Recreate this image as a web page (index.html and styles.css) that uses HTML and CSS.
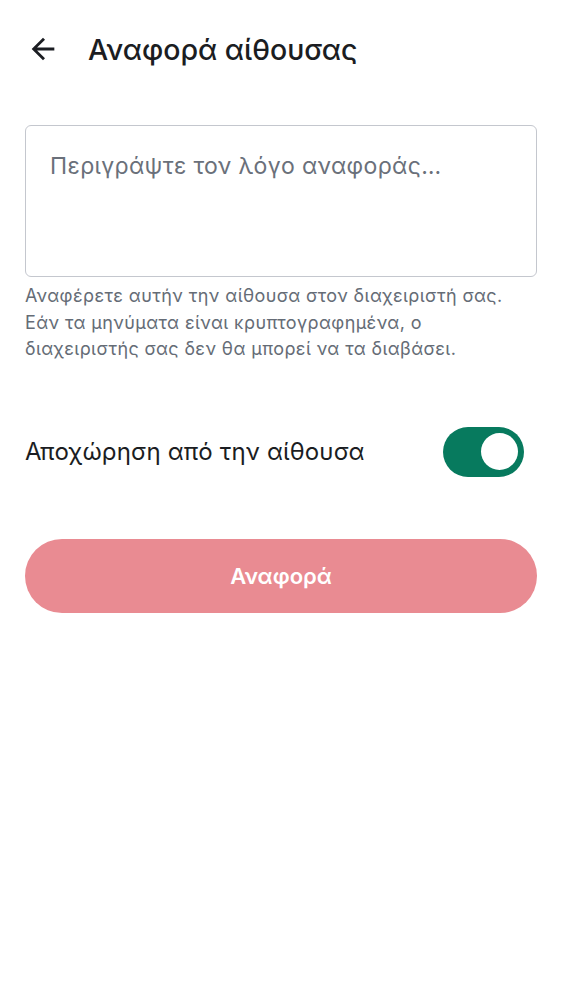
FILE: index.html
```html
<!DOCTYPE html>
<html lang="el">
<head>
<meta charset="utf-8">
<title>Αναφορά αίθουσας</title>
<link rel="stylesheet" href="styles.css">
</head>
<body>
<div class="screen">
  <header class="topbar">
    <button class="back" aria-label="Πίσω">
      <svg viewBox="0 0 24 24" width="34" height="34"><path d="M20 11H7.83l5.59-5.59L12 4l-8 8 8 8 1.41-1.41L7.83 13H20v-2z" fill="#1b1d22"/></svg>
    </button>
    <h1 class="title">Αναφορά αίθουσας</h1>
  </header>
  <main class="content">
    <div class="field">
      <div class="placeholder">Περιγράψτε τον λόγο αναφοράς…</div>
    </div>
    <p class="helper">Αναφέρετε αυτήν την αίθουσα στον διαχειριστή σας. Εάν τα μηνύματα είναι κρυπτογραφημένα, ο διαχειριστής σας δεν θα μπορεί να τα διαβάσει.</p>
    <div class="toggle-row">
      <span class="toggle-label">Αποχώρηση από την αίθουσα</span>
      <span class="switch"><span class="thumb"></span></span>
    </div>
    <button class="submit">Αναφορά</button>
  </main>
</div>
</body>
</html>
```
FILE: styles.css
```css
html, body {
  margin: 0;
  padding: 0;
  background: #ffffff;
}
body {
  font-family: Inter, "Noto Sans", sans-serif;
  color: #1b1d22;
}
.screen {
  width: 562px;
  min-height: 1000px;
}
.topbar {
  display: flex;
  align-items: center;
  height: 100px;
  padding-left: 26px;
  box-sizing: border-box;
  padding-bottom: 2px;
}
.back {
  display: flex;
  border: 0;
  background: none;
  padding: 0;
  width: 34px;
  height: 34px;
  margin-right: 28px;
}
.title {
  margin: 0;
  font-size: 28.5px;
  font-weight: 500;
  letter-spacing: 0;
  color: #1b1d22;
}
.content {
  padding: 25px 25px 0;
  display: flex;
  flex-direction: column;
}
.field {
  height: 152px;
  border: 1.5px solid #c4c7ce;
  border-radius: 6px;
  box-sizing: border-box;
  padding: 24px 24px;
}
.placeholder {
  font-size: 23px;
  line-height: 33px;
  color: #6a707a;
  letter-spacing: 0.35px;
}
.helper {
  margin: 6px 0 0;
  font-size: 18px;
  line-height: 26.5px;
  color: #656c76;
  letter-spacing: 0.4px;
}
.toggle-row {
  display: flex;
  align-items: center;
  justify-content: space-between;
  margin-top: 64px;
  padding-right: 13px;
}
.toggle-label {
  font-size: 24px;
  color: #1b1d22;
  letter-spacing: 0.15px;
}
.switch {
  width: 81px;
  height: 50px;
  border-radius: 25px;
  background: #077a5e;
  display: flex;
  align-items: center;
  justify-content: flex-end;
  padding-right: 6px;
  box-sizing: border-box;
}
.thumb {
  width: 37px;
  height: 37px;
  border-radius: 50%;
  background: #ffffff;
}
.submit {
  margin-top: 62px;
  height: 74px;
  border: 0;
  border-radius: 37px;
  background: #e98b92;
  color: #ffffff;
  font-family: Inter, sans-serif;
  font-size: 22px;
  font-weight: 600;
}
```
